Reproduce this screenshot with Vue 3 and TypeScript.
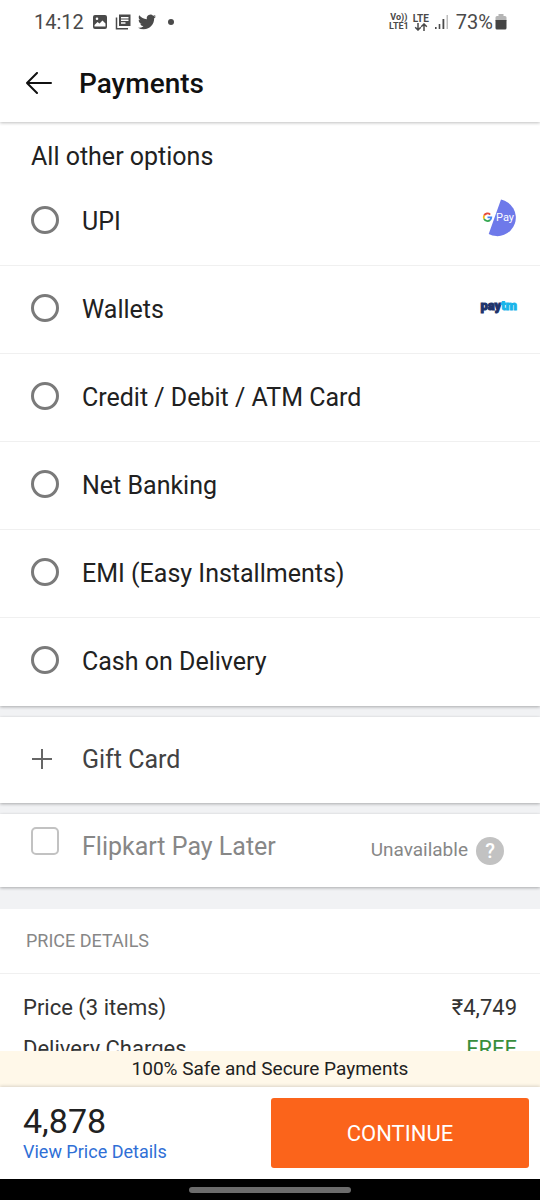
<script setup lang="ts">
import { ref } from 'vue'

interface PaymentOption {
  id: string
  label: string
  logo?: 'gpay' | 'paytm'
}

const options: PaymentOption[] = [
  { id: 'upi', label: 'UPI', logo: 'gpay' },
  { id: 'wallets', label: 'Wallets', logo: 'paytm' },
  { id: 'card', label: 'Credit / Debit / ATM Card' },
  { id: 'netbanking', label: 'Net Banking' },
  { id: 'emi', label: 'EMI (Easy Installments)' },
  { id: 'cod', label: 'Cash on Delivery' },
]

const selected = ref<string>('')
</script>

<template>
  <div class="screen">
    <div class="status">
      <span class="clock">14:12</span>
      <svg class="st-icon" viewBox="0 0 16 16" width="16" height="16" aria-hidden="true">
        <path fill="#4a4a4a" fill-rule="evenodd" d="M3 1h10a2 2 0 0 1 2 2v10a2 2 0 0 1-2 2H3a2 2 0 0 1-2-2V3a2 2 0 0 1 2-2zM3 12.500h10.500V9.500L10.500 6.500 7.500 9.500 5.500 8 2.500 11v1.500zM5 3.500a1.300 1.300 0 1 0 0 2.600a1.300 1.300 0 0 0 0-2.600z" />
      </svg>
      <svg class="st-icon" viewBox="0 0 16 16" width="16" height="16" aria-hidden="true">
        <path fill="#4a4a4a" fill-rule="evenodd" d="M4 .500h11.500v11.500H4zM6 3v1.400h7.500V3zM6 5.600V7h7.500V5.600zM6 8.300v1.400h4.500V8.300z" />
        <path fill="none" stroke="#4a4a4a" stroke-width="1.500" d="M1.500 3.500v11.300H13" />
      </svg>
      <svg class="st-icon" viewBox="0 0 24 24" width="18" height="18" aria-hidden="true">
        <path fill="#4a4a4a" d="M23.950 4.570a10 10 0 0 1-2.820.770 4.960 4.960 0 0 0 2.160-2.720c-.950.550-2 .950-3.130 1.180a4.920 4.920 0 0 0-8.380 4.480C7.690 8.090 4.070 6.130 1.640 3.160a4.820 4.820 0 0 0-.670 2.480c0 1.710.870 3.210 2.190 4.100a4.900 4.900 0 0 1-2.230-.620v.060a4.920 4.920 0 0 0 3.950 4.830 5 5 0 0 1-2.210.080 4.940 4.940 0 0 0 4.600 3.420A9.870 9.870 0 0 1 0 19.540a14 14 0 0 0 7.550 2.210c9.050 0 14-7.500 14-13.980 0-.210 0-.420-.020-.630a9.940 9.940 0 0 0 2.460-2.550z" />
      </svg>
      <span class="dot"></span>
      <span class="spacer"></span>
      <span class="net"><span>Vo))</span><span>LTE1</span></span>
      <span class="net lte">
        <span>LTE</span>
        <svg viewBox="0 0 14 8" width="14" height="8" aria-hidden="true">
          <path fill="none" stroke="#4a4a4a" stroke-width="1.500" d="M4 0v7M1.200 4.200 4 7l2.800-2.800M10 8V1M7.200 3.800 10 1l2.800 2.800" />
        </svg>
      </span>
      <svg class="signal" viewBox="0 0 14 14" width="14" height="14" aria-hidden="true">
        <path fill="#4a4a4a" d="M0 12h1.600v2H0zM3.700 9h1.600v5H3.700zM7.500 4h1.800v10H7.500z" />
        <path fill="#bdbdbd" d="M11.500 0H13v14h-1.500z" />
      </svg>
      <span class="pct">73%</span>
      <svg class="battery" viewBox="0 0 12 16" width="12" height="16" aria-hidden="true">
        <path fill="#b5b5b5" d="M3.500 0h5v2H10a1.500 1.500 0 0 1 1.500 1.500V7H.5V3.500A1.500 1.500 0 0 1 2 2h1.500z" />
        <path fill="#444" d="M.5 6h11v8a1.500 1.500 0 0 1-1.500 1.500H2A1.500 1.500 0 0 1 .5 14z" />
      </svg>
    </div>

    <header class="header">
      <button class="back" type="button" aria-label="Back">
        <svg viewBox="0 0 26 22" width="26" height="22" aria-hidden="true">
          <path fill="none" stroke="#111" stroke-width="2" stroke-linecap="round" stroke-linejoin="round" d="M25 11H1M11 1 1 11l10 10" />
        </svg>
      </button>
      <h1>Payments</h1>
    </header>

    <main class="content">
      <section class="card options">
        <h2>All other options</h2>
        <label v-for="option in options" :key="option.id" class="row option" :for="option.id">
          <input :id="option.id" v-model="selected" type="radio" name="payment" :value="option.id" />
          <span class="label">{{ option.label }}</span>
          <svg v-if="option.logo === 'gpay'" class="logo" viewBox="0 0 36 38" width="36" height="38" aria-hidden="true">
            <path fill="#6e79ea" d="M20 .500A18.500 18.500 0 1 1 7.700 35z" />
            <g fill="none" stroke-width="1.800">
              <path stroke="#e64a3b" d="M9.200 15.600A3.800 3.800 0 0 0 3.100 16.500" />
              <path stroke="#f5b912" d="M3.100 16.500a3.800 3.800 0 0 0 0 3.400" />
              <path stroke="#36a852" d="M3.100 19.900a3.800 3.800 0 0 0 6 1.100" />
              <path stroke="#4285f4" d="M9.100 21a3.800 3.800 0 0 0 1.200-2.700H6.500" />
            </g>
            <text class="gpay-text" x="15" y="22">Pay</text>
          </svg>
          <span v-if="option.logo === 'paytm'" class="logo paytm">pay<b>tm</b></span>
        </label>
      </section>

      <section class="card">
        <button class="row gift" type="button">
          <svg class="plus" viewBox="0 0 20 20" width="20" height="20" aria-hidden="true">
            <path stroke="#666" stroke-width="2" d="M10 0v20M0 10h20" />
          </svg>
          <span class="label">Gift Card</span>
        </button>
      </section>

      <section class="card row later">
        <input id="paylater" type="checkbox" disabled />
        <label class="label" for="paylater">Flipkart Pay Later</label>
        <span class="unavailable">Unavailable</span>
        <button class="help" type="button" aria-label="Help">?</button>
      </section>

      <section id="price" class="price">
        <h3>PRICE DETAILS</h3>
        <dl>
          <div><dt>Price (3 items)</dt><dd>₹4,749</dd></div>
          <div><dt>Delivery Charges</dt><dd class="free">FREE</dd></div>
        </dl>
      </section>
    </main>

    <div class="safe">100% Safe and Secure Payments</div>
    <footer class="footer">
      <div class="total">
        <span class="amount">4,878</span>
        <a href="#price">View Price Details</a>
      </div>
      <button class="continue" type="button">CONTINUE</button>
    </footer>
    <div class="navbar"><span></span></div>
  </div>
</template>

<style>
body {
  margin: 0;
}
</style>

<style scoped>
.screen {
  display: flex;
  flex-direction: column;
  height: 100vh;
  background: #fff;
  color: #212121;
  font-family: Roboto, "Liberation Sans", sans-serif;
}
h1, h2, h3, dl, dd {
  margin: 0;
}
button {
  border: 0;
  padding: 0;
  background: none;
  font-family: inherit;
}
svg {
  flex: none;
}
.status {
  display: flex;
  align-items: center;
  flex: none;
  z-index: 2;
  height: 44px;
  padding: 0 33px 0 34px;
  background: #fff;
  color: #4a4a4a;
}
.clock {
  font-size: 20px;
  margin-right: 8px;
}
.st-icon {
  margin-right: 7px;
}
.dot {
  width: 6px;
  height: 6px;
  margin-left: 5px;
  border-radius: 50%;
  background: #4a4a4a;
}
.spacer {
  flex: 1;
}
.net {
  display: flex;
  flex-direction: column;
  align-items: center;
  margin-right: 4px;
  font-size: 9px;
  line-height: 9px;
  font-weight: 700;
}
.lte {
  margin-right: 6px;
  font-size: 10px;
}
.signal {
  margin-right: 7px;
}
.pct {
  font-size: 20px;
  margin-right: 2px;
}
.header {
  display: flex;
  align-items: center;
  flex: none;
  z-index: 1;
  height: 78px;
  padding: 0 26px;
  background: #fff;
  box-shadow: 0 1px 3px rgba(0, 0, 0, 0.25);
}
.back {
  display: flex;
  margin-right: 27px;
}
h1 {
  padding-top: 2px;
  color: #111;
  font-size: 28px;
  line-height: 32px;
  font-weight: 500;
}
.content {
  display: flex;
  flex-direction: column;
  flex: 1;
  min-height: 0;
  overflow: hidden;
  background: #f1f2f4;
}
.card {
  flex: none;
  margin-bottom: 11px;
  background: #fff;
  box-shadow: 0 1px 3px rgba(0, 0, 0, 0.3);
}
h2 {
  padding: 20px 31px 7px;
  font-size: 25px;
  line-height: 29px;
  font-weight: 400;
}
.row {
  display: flex;
  align-items: center;
  box-sizing: border-box;
  width: 100%;
  padding: 0 23px 0 31px;
}
.option {
  height: 88px;
  border-bottom: 1px solid #f0f0f0;
}
.option:last-child {
  border-bottom: 0;
}
.label {
  flex: 1;
  font-size: 25px;
  line-height: 30px;
  text-align: left;
}
input {
  appearance: none;
  box-sizing: border-box;
  flex: none;
  width: 28px;
  height: 28px;
  margin: 0 23px 4px 0;
  border: 3px solid #7a7a7a;
  border-radius: 50%;
  background: #fff;
}
input:checked {
  background: #757575;
  box-shadow: inset 0 0 0 4px #fff;
}
.logo {
  margin-bottom: 8px;
}
.gpay-text {
  fill: #fff;
  font-size: 11px;
}
.paytm {
  color: #20336b;
  font-size: 13px;
  line-height: 18px;
  font-weight: 900;
  -webkit-text-stroke: 1px currentColor;
}
.paytm b {
  color: #19b5ea;
}
.gift {
  height: 86px;
  color: #424242;
}
.plus {
  margin: 0 30px 2px 1px;
}
.later {
  height: 73px;
  padding-right: 36px;
  margin-bottom: 22px;
  color: #878787;
}
.later input {
  margin-bottom: 20px;
  border: 2px solid #c2c2c2;
  border-radius: 5px;
}
.later .label {
  margin-bottom: 8px;
}
.unavailable {
  margin-bottom: 2px;
  font-size: 19px;
}
.help {
  width: 28px;
  height: 28px;
  margin-left: 8px;
  border-radius: 50%;
  background: #c2c2c2;
  color: #fff;
  font-size: 20px;
  font-weight: 500;
}
.price {
  flex: none;
  background: #fff;
}
h3 {
  padding: 20px 26px;
  border-bottom: 1px solid #f0f0f0;
  color: #878787;
  font-size: 18px;
  line-height: 24px;
  font-weight: 400;
}
dl {
  padding: 13px 23px;
  color: #333;
}
dl div {
  display: flex;
  justify-content: space-between;
  font-size: 22px;
  line-height: 41px;
}
.free {
  color: #388e3c;
}
.safe {
  flex: none;
  background: #fff8e9;
  font-size: 19px;
  line-height: 36px;
  text-align: center;
}
.footer {
  display: flex;
  align-items: center;
  flex: none;
  height: 92px;
  padding: 0 11px 0 23px;
  background: #fff;
  box-shadow: 0 -1px 3px rgba(0, 0, 0, 0.15);
}
.total {
  display: flex;
  flex: 1;
  flex-direction: column;
}
.amount {
  font-size: 34px;
  line-height: 38px;
}
.total a {
  color: #2f6fd6;
  font-size: 18px;
  line-height: 24px;
  text-decoration: none;
}
.continue {
  width: 51%;
  height: 70px;
  border-radius: 3px;
  background: #fb641b;
  color: #fff;
  font-size: 22px;
}
.navbar {
  display: flex;
  align-items: center;
  justify-content: center;
  flex: none;
  height: 21px;
  background: #000;
}
.navbar span {
  width: 30%;
  height: 6px;
  border-radius: 3px;
  background: #6b6b6b;
}
</style>
